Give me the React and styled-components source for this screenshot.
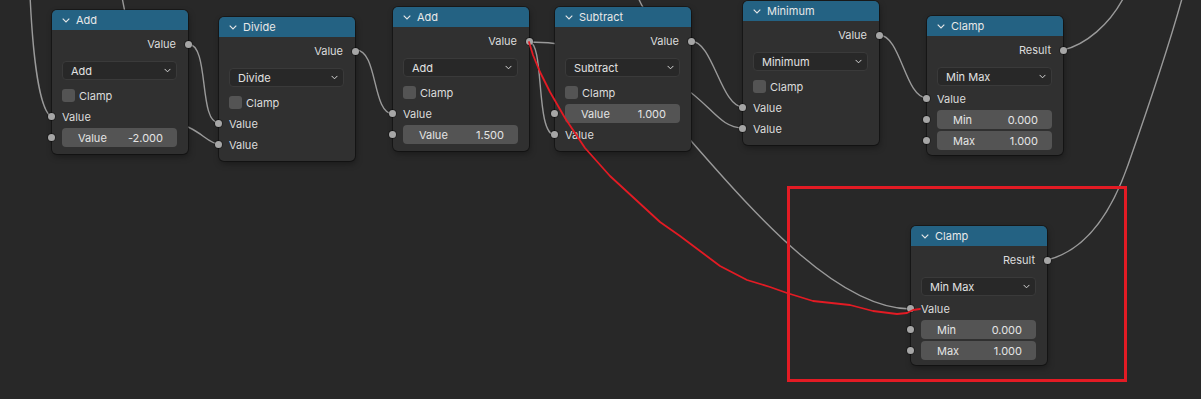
import React from 'react'
import styled, { createGlobalStyle } from 'styled-components'

const GlobalStyle = createGlobalStyle`
  *, *::before, *::after {
    box-sizing: border-box;
  }
  html, body {
    margin: 0;
    padding: 0;
    background: #282828;
    overflow: hidden;
  }
  body {
    font-family: Inter, "Noto Sans", "DejaVu Sans", sans-serif;
  }
`

const Canvas = styled.div`
  position: relative;
  width: 1201px;
  height: 399px;
  overflow: hidden;
  background: #282828;
`

const WireLayer = styled.svg`
  position: absolute;
  left: 0;
  top: 0;
  width: 1201px;
  height: 399px;
  pointer-events: none;
  z-index: ${(p) => (p.$top ? 3 : 0)};
`

const NodeBox = styled.div`
  position: absolute;
  left: ${(p) => p.$x}px;
  top: ${(p) => p.$y}px;
  width: 136px;
  background: #303030;
  border-radius: 5px;
  box-shadow: 0 0 0 1px rgba(0, 0, 0, 0.35), 1px 3px 6px rgba(0, 0, 0, 0.35);
  z-index: 1;
  color: #dcdcdc;
  font-size: 11px;
`

const Header = styled.div`
  height: 20px;
  display: flex;
  align-items: center;
  gap: 6px;
  padding-left: 10px;
  background: #246283;
  border-radius: 5px 5px 0 0;
  color: #e8e8e8;
  font-size: 11px;
`

const Body = styled.div`
  padding: 4px 0 ${(p) => p.$bottom}px;
`

const Row = styled.div`
  position: relative;
  height: ${(p) => p.$h || 21}px;
  display: flex;
  align-items: center;
`

const OutputRow = styled(Row)`
  justify-content: flex-end;
  padding-right: 12px;
`

const InputRow = styled(Row)`
  padding-left: 10px;
`

const FieldRow = styled(Row)`
  padding: 1px 11px 1px 10px;
`

const Socket = styled.span`
  position: absolute;
  top: 50%;
  ${(p) => (p.$side === 'right' ? 'right: -4px;' : 'left: -4px;')}
  width: 7px;
  height: 7px;
  margin-top: -3.5px;
  border-radius: 50%;
  background: #a6a6a6;
  box-shadow: 0 0 0 1px rgba(0, 0, 0, 0.3);
`

const Dropdown = styled.div`
  margin: 7px 11px ${(p) => p.$after}px 10px;
  height: 19px;
  display: flex;
  align-items: center;
  justify-content: space-between;
  padding: 0 5px 0 8px;
  background: #282828;
  border: 1px solid #3a3a3a;
  border-radius: 4px;
  color: #e2e2e2;
`

const CheckRow = styled(Row)`
  padding-left: 10px;
  gap: 4px;
`

const CheckBox = styled.span`
  width: 13px;
  height: 13px;
  border-radius: 3px;
  background: #545454;
`

const Field = styled.div`
  flex: 1;
  height: 19px;
  display: flex;
  align-items: center;
  justify-content: space-between;
  padding: 0 14px 0 16px;
  background: #545454;
  border-radius: 4px;
  color: #e4e4e4;
`

const Frame = styled.div`
  position: absolute;
  left: 787px;
  top: 186px;
  width: 340px;
  height: 196px;
  border: 3px solid #e31b24;
  z-index: 3;
`

const Chevron = ({ w = 8, h = 5, color = '#dcdcdc' }) => (
  <svg width={w} height={h} viewBox="0 0 8 5">
    <polyline points="0.7,0.7 4,4 7.3,0.7" fill="none" stroke={color} strokeWidth="1.1" />
  </svg>
)

const mathInputs = (a, b) => [a, b]

const nodes = [
  { x: 52, y: 10, title: 'Add', op: 'Add', kind: 'math', out: 'Value',
    inputs: mathInputs({ label: 'Value' }, { label: 'Value', value: '-2.000' }) },
  { x: 219, y: 17, title: 'Divide', op: 'Divide', kind: 'math', out: 'Value',
    inputs: mathInputs({ label: 'Value' }, { label: 'Value' }) },
  { x: 393, y: 7, title: 'Add', op: 'Add', kind: 'math', out: 'Value',
    inputs: mathInputs({ label: 'Value' }, { label: 'Value', value: '1.500' }) },
  { x: 555, y: 7, title: 'Subtract', op: 'Subtract', kind: 'math', out: 'Value',
    inputs: mathInputs({ label: 'Value', value: '1.000' }, { label: 'Value' }) },
  { x: 743, y: 1, title: 'Minimum', op: 'Minimum', kind: 'math', out: 'Value',
    inputs: mathInputs({ label: 'Value' }, { label: 'Value' }) },
  { x: 927, y: 16, title: 'Clamp', op: 'Min Max', kind: 'clamp', out: 'Result',
    inputs: [{ label: 'Value' }, { label: 'Min', value: '0.000' }, { label: 'Max', value: '1.000' }] },
  { x: 911, y: 226, title: 'Clamp', op: 'Min Max', kind: 'clamp', out: 'Result',
    inputs: [{ label: 'Value' }, { label: 'Min', value: '0.000' }, { label: 'Max', value: '1.000' }] },
]

// gray links, drawn under the nodes
const links = [
  'M 30 -5 C 33 60 40 112 52 117',
  'M 188 44 C 210 44 198 123 219 123',
  'M 121 -10 C 128 40 150 110 190 128 C 203 134 210 144 219 144',
  'M 356 50 C 378 50 372 114 393 114',
  'M 529 42 C 545 42 535 135 555 135',
  'M 529 42 C 580 42 640 60 682 86 C 712 106 720 128 743 128',
  'M 691 41 C 713 41 721 107 743 107',
  'M 670 115 L 692 142 C 760 220 840 309 911 309',
  'M 637 -5 C 640 2 643 8 646 12',
  'M 879 35 C 901 35 905 98 927 98',
  'M 1063 50 C 1085 45 1110 25 1125 -5',
  'M 1047 260 C 1080 252 1108 222 1128 165 S 1172 35 1183 -5',
]

const redPoints = [
  [529, 42], [533, 55], [540, 72], [550, 92], [565, 118], [585, 148], [610, 176],
  [635, 199], [660, 222], [680, 236], [700, 251], [720, 266], [747, 280], [770, 287],
  [787, 293], [813, 301], [850, 305], [873, 311], [897, 314], [907, 313], [913, 310], [920, 309],
]

function Input({ input }) {
  if (input.value) {
    return (
      <FieldRow>
        <Socket />
        <Field>
          <span>{input.label}</span>
          <span>{input.value}</span>
        </Field>
      </FieldRow>
    )
  }
  return (
    <InputRow>
      <Socket />
      {input.label}
    </InputRow>
  )
}

function Node({ node }) {
  const isMath = node.kind === 'math'
  return (
    <NodeBox $x={node.x} $y={node.y}>
      <Header>
        <Chevron color="#e8e8e8" />
        {node.title}
      </Header>
      <Body $bottom={isMath ? 6 : 4}>
        <OutputRow $h={20}>
          {node.out}
          <Socket $side="right" />
        </OutputRow>
        <Dropdown $after={isMath ? 5 : 2}>
          <span>{node.op}</span>
          <Chevron w={7} h={5} />
        </Dropdown>
        {isMath && (
          <CheckRow>
            <CheckBox />
            Clamp
          </CheckRow>
        )}
        {node.inputs.map((input, i) => (
          <Input key={i} input={input} />
        ))}
      </Body>
    </NodeBox>
  )
}

export default function App() {
  return (
    <>
      <GlobalStyle />
      <Canvas>
        <WireLayer viewBox="0 0 1201 399">
          {links.map((d, i) => (
            <path key={i} d={d} fill="none" stroke="#9a9a9a" strokeWidth="1.4" />
          ))}
        </WireLayer>
        {nodes.map((node, i) => (
          <Node key={i} node={node} />
        ))}
        <WireLayer $top viewBox="0 0 1201 399">
          <polyline
            points={redPoints.map((p) => p.join(',')).join(' ')}
            fill="none"
            stroke="#e31b24"
            strokeWidth="1.8"
            strokeLinejoin="round"
            strokeLinecap="round"
          />
        </WireLayer>
        <Frame />
      </Canvas>
    </>
  )
}
